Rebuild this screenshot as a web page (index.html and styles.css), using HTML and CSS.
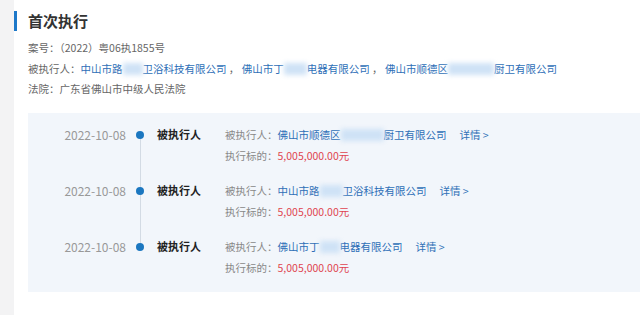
FILE: index.html
```html
<!DOCTYPE html>
<html lang="zh">
<head>
    <meta charset="UTF-8">
    <title>首次执行</title>
    <link rel="stylesheet" href="styles.css">
</head>
<body>
    <div class="side"></div>
    <div class="main">
        <h2 class="title">首次执行</h2>

        <div class="info">
            <div class="info-row">案号：（2022）粤06执1855号</div>
            <div class="info-row">被执行人：<a class="link">中山市路<span class="blur w20"></span>卫浴科技有限公司</a> ， <a class="link">佛山市丁<span class="blur w23"></span>电器有限公司</a> ， <a class="link">佛山市顺德区<span class="blur w46"></span>厨卫有限公司</a></div>
            <div class="info-row">法院：广东省佛山市中级人民法院</div>
        </div>

        <div class="timeline">
            <div class="tl-item">
                <div class="tl-date">2022-10-08</div>
                <div class="tl-dot"></div>
                <div class="tl-label">被执行人</div>
                <div class="tl-body">
                    <div>被执行人：<a class="link">佛山市顺德区<span class="blur w43"></span>厨卫有限公司</a><a class="more">详情 &gt;</a></div>
                    <div>执行标的：<span class="money">5,005,000.00元</span></div>
                </div>
            </div>
            <div class="tl-item">
                <div class="tl-date">2022-10-08</div>
                <div class="tl-dot"></div>
                <div class="tl-label">被执行人</div>
                <div class="tl-body">
                    <div>被执行人：<a class="link">中山市路<span class="blur w23"></span>卫浴科技有限公司</a><a class="more">详情 &gt;</a></div>
                    <div>执行标的：<span class="money">5,005,000.00元</span></div>
                </div>
            </div>
            <div class="tl-item">
                <div class="tl-date">2022-10-08</div>
                <div class="tl-dot"></div>
                <div class="tl-label">被执行人</div>
                <div class="tl-body">
                    <div>被执行人：<a class="link">佛山市丁<span class="blur w20"></span>电器有限公司</a><a class="more">详情 &gt;</a></div>
                    <div>执行标的：<span class="money">5,005,000.00元</span></div>
                </div>
            </div>
        </div>
    </div>
</body>
</html>
```

FILE: styles.css
```css
* {
    box-sizing: border-box;
    margin: 0;
    padding: 0;
}

body {
    display: flex;
    min-height: 100vh;
    background: #fff;
    font-family: "Noto Sans CJK SC", "Noto Sans", sans-serif;
    font-size: 10.5px;
    color: #666;
    overflow: hidden;
}

.side {
    width: 14px;
    flex-shrink: 0;
    background: #f3f3f4;
}

.main {
    flex: 1;
    padding-top: 11px;
}

.title {
    border-left: 3px solid #1d78c9;
    padding-left: 11px;
    height: 20px;
    line-height: 20px;
    font-size: 15px;
    font-weight: 700;
    color: #333;
}

.info {
    margin-top: 7px;
    padding-left: 14px;
}

.info-row {
    line-height: 20.5px;
    white-space: nowrap;
}

.link {
    color: #2e6fb7;
}

.blur {
    display: inline-block;
    height: 12px;
    vertical-align: -2px;
    background: #cfe2f6;
    filter: blur(2.5px);
}

.w20 { width: 20px; }
.w23 { width: 23px; }
.w43 { width: 43px; }
.w46 { width: 46px; }

.timeline {
    margin: 13px 0 0 14px;
    padding: 11px 0 14px;
    background: #f2f6fb;
    display: flex;
    flex-direction: column;
    gap: 14px;
}

.tl-item {
    display: flex;
    line-height: 21px;
}

.tl-date {
    width: 98px;
    text-align: right;
    font-size: 12px;
    color: #999;
}

.tl-dot {
    width: 28px;
    position: relative;
}

.tl-dot::before {
    content: "";
    position: absolute;
    left: 10px;
    top: 7px;
    width: 8px;
    height: 8px;
    border-radius: 50%;
    background: #1b77c0;
    z-index: 1;
}

.tl-item:not(:last-child) .tl-dot::after {
    content: "";
    position: absolute;
    left: 13.5px;
    top: 11px;
    width: 1px;
    height: 56px;
    background: #d3dbe4;
}

.tl-label {
    width: 71px;
    padding-left: 3px;
    font-size: 11px;
    font-weight: 700;
    color: #222;
}

.tl-body {
    white-space: nowrap;
    color: #888;
}

.more {
    margin-left: 13px;
    color: #2e6fb7;
}

.money {
    color: #e0444f;
}
```
